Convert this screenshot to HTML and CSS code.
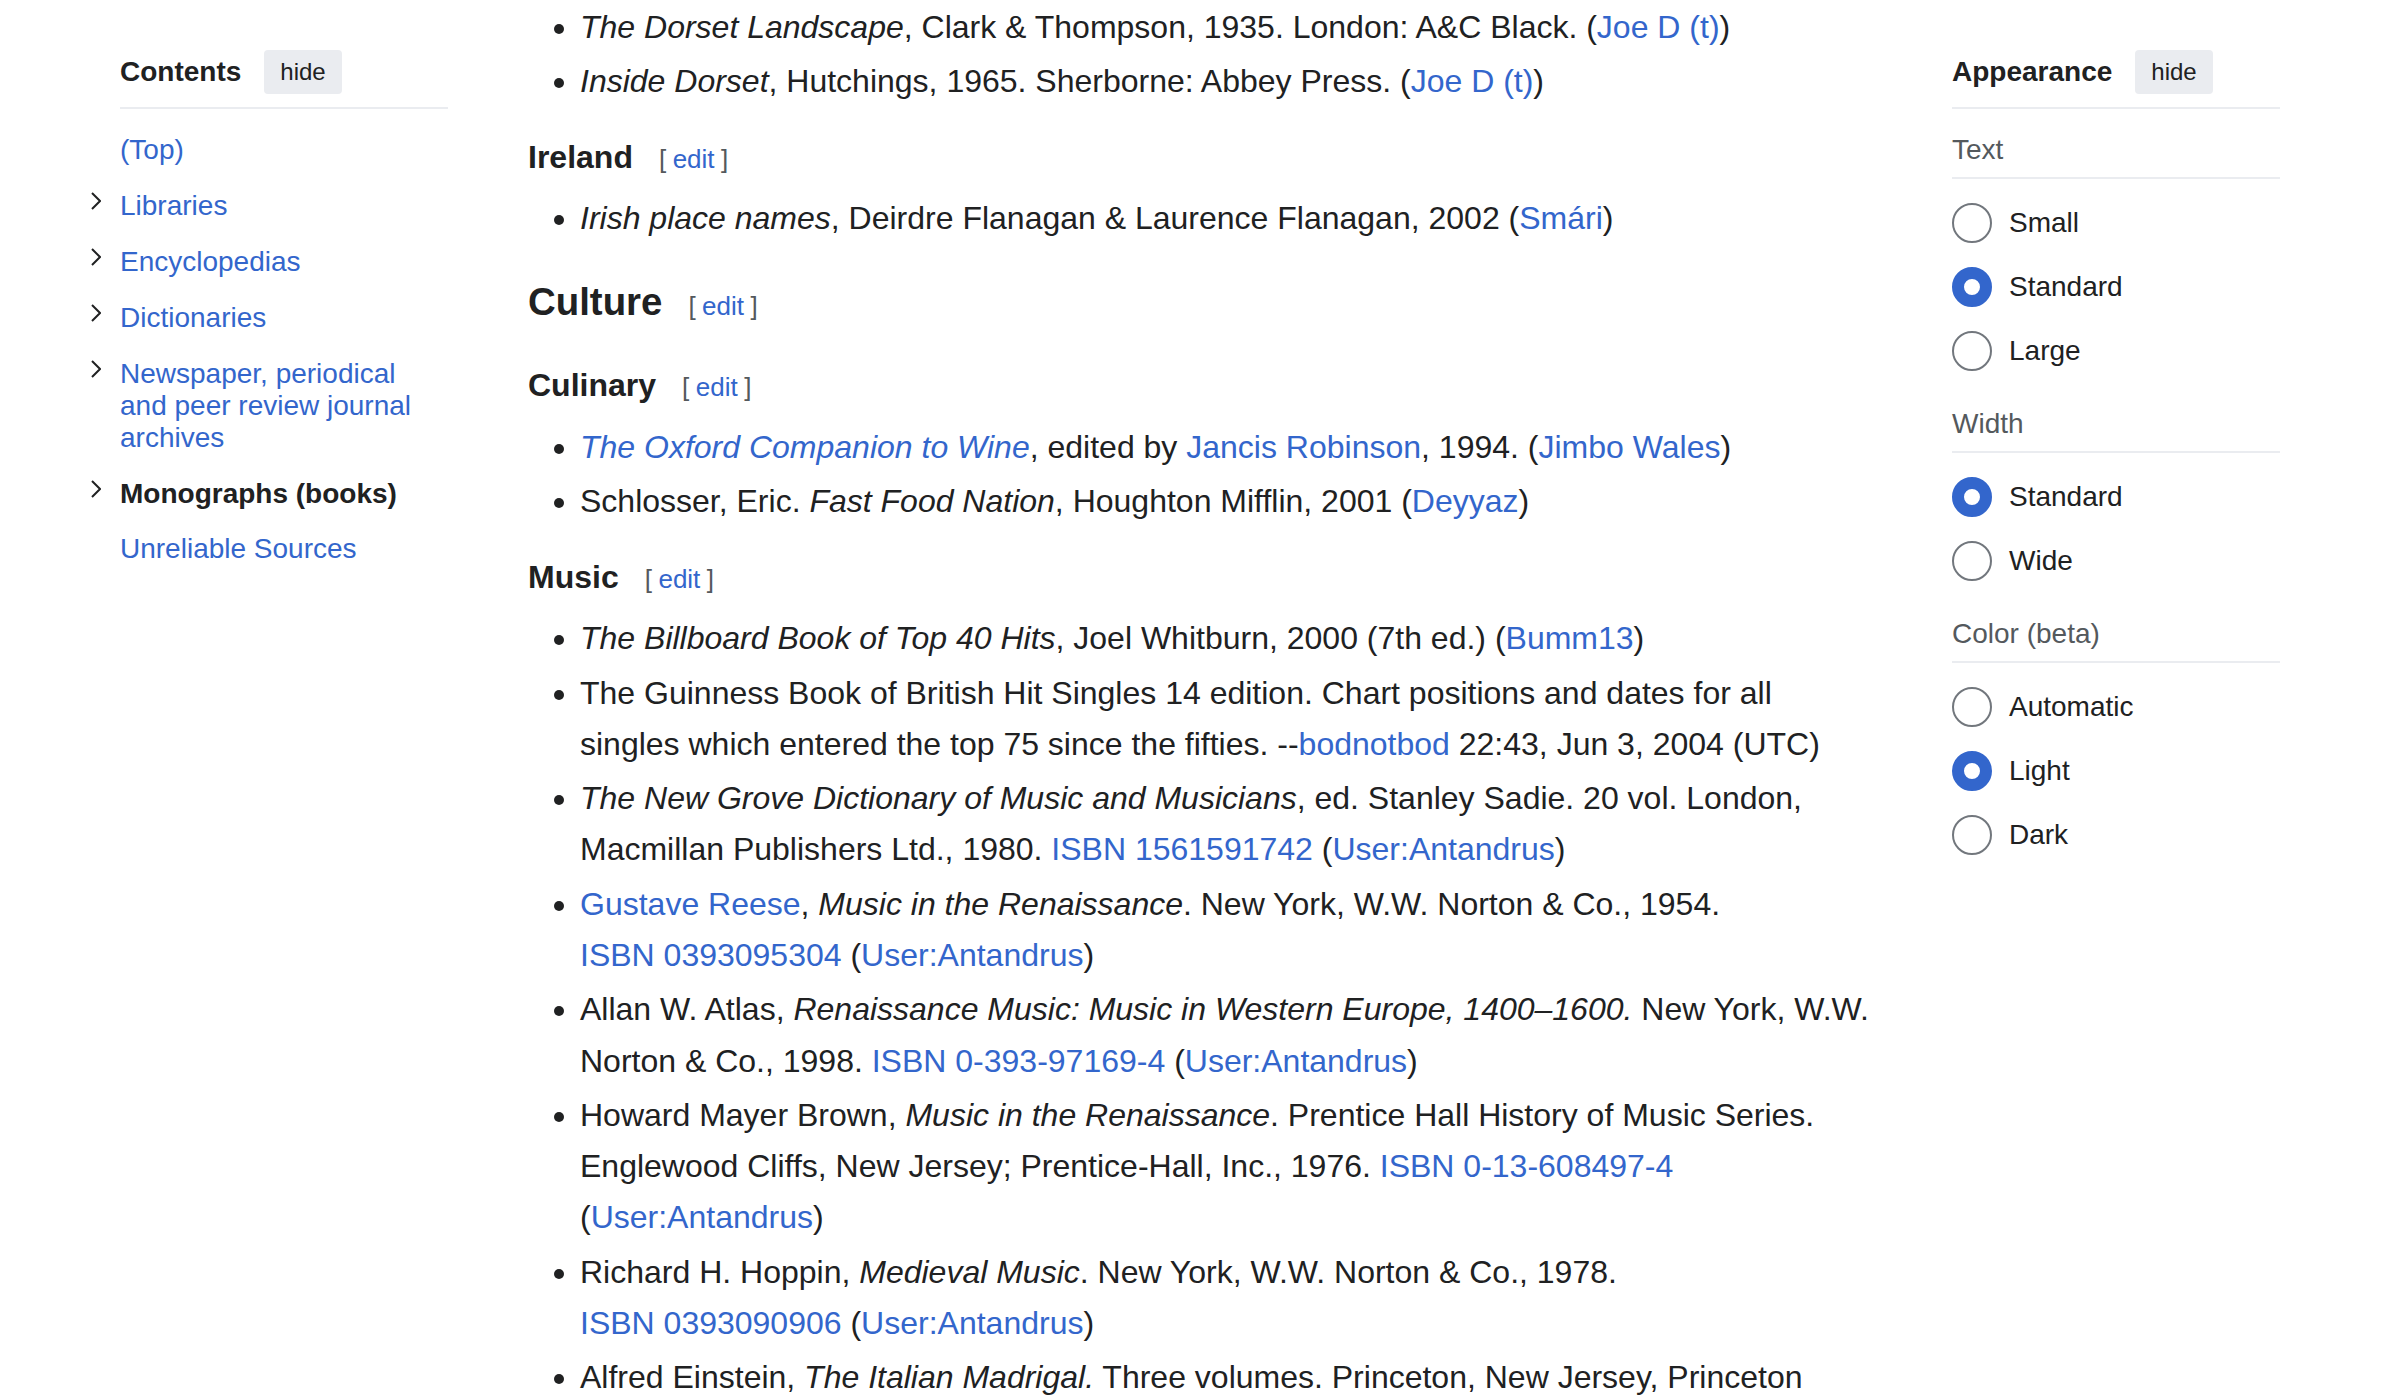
FILE: index.html
```html
<!DOCTYPE html>
<html lang="en">
<head>
<meta charset="utf-8">
<title>Bibliography</title>
<link rel="stylesheet" href="styles.css">
</head>
<body>
<div class="page">
  <nav class="toc">
    <div class="panel-head">
      <span class="panel-title">Contents</span>
      <button class="hide-btn">hide</button>
    </div>
    <ul class="toc-list">
      <li class="toc-item"><a href="#">(Top)</a></li>
      <li class="toc-item"><span class="toggle"><svg width="10" height="18" viewBox="0 0 10 18"><path d="M1 1 L9 9 L1 17" fill="none" stroke="#202122" stroke-width="2"/></svg></span><a href="#">Libraries</a></li>
      <li class="toc-item"><span class="toggle"><svg width="10" height="18" viewBox="0 0 10 18"><path d="M1 1 L9 9 L1 17" fill="none" stroke="#202122" stroke-width="2"/></svg></span><a href="#">Encyclopedias</a></li>
      <li class="toc-item"><span class="toggle"><svg width="10" height="18" viewBox="0 0 10 18"><path d="M1 1 L9 9 L1 17" fill="none" stroke="#202122" stroke-width="2"/></svg></span><a href="#">Dictionaries</a></li>
      <li class="toc-item"><span class="toggle"><svg width="10" height="18" viewBox="0 0 10 18"><path d="M1 1 L9 9 L1 17" fill="none" stroke="#202122" stroke-width="2"/></svg></span><a href="#">Newspaper, periodical and peer review journal archives</a></li>
      <li class="toc-item"><span class="toggle"><svg width="10" height="18" viewBox="0 0 10 18"><path d="M1 1 L9 9 L1 17" fill="none" stroke="#202122" stroke-width="2"/></svg></span><a href="#" class="active">Monographs (books)</a></li>
      <li class="toc-item"><a href="#">Unreliable Sources</a></li>
    </ul>
  </nav>

  <main class="main">
    <ul class="refs first">
      <li><i>The Dorset Landscape</i>, Clark &amp; Thompson, 1935. London: A&amp;C Black. (<a href="#">Joe D (t)</a>)</li>
      <li><i>Inside Dorset</i>, Hutchings, 1965. Sherborne: Abbey Press. (<a href="#">Joe D (t)</a>)</li>
    </ul>
    <h4>Ireland<span class="edit"><span class="br">[</span><a href="#">edit</a><span class="br">]</span></span></h4>
    <ul class="refs">
      <li><i>Irish place names</i>, Deirdre Flanagan &amp; Laurence Flanagan, 2002 (<a href="#">Smári</a>)</li>
    </ul>
    <h3>Culture<span class="edit"><span class="br">[</span><a href="#">edit</a><span class="br">]</span></span></h3>
    <h4>Culinary<span class="edit"><span class="br">[</span><a href="#">edit</a><span class="br">]</span></span></h4>
    <ul class="refs">
      <li><a href="#"><i>The Oxford Companion to Wine</i></a>, edited by <a href="#">Jancis Robinson</a>, 1994. (<a href="#">Jimbo Wales</a>)</li>
      <li>Schlosser, Eric. <i>Fast Food Nation</i>, Houghton Mifflin, 2001 (<a href="#">Deyyaz</a>)</li>
    </ul>
    <h4>Music<span class="edit"><span class="br">[</span><a href="#">edit</a><span class="br">]</span></span></h4>
    <ul class="refs">
      <li><i>The Billboard Book of Top 40 Hits</i>, Joel Whitburn, 2000 (7th ed.) (<a href="#">Bumm13</a>)</li>
      <li>The Guinness Book of British Hit Singles 14 edition. Chart positions and dates for all singles which entered the top 75 since the fifties. --<a href="#">bodnotbod</a> 22:43, Jun 3, 2004 (UTC)</li>
      <li><i>The New Grove Dictionary of Music and Musicians</i>, ed. Stanley Sadie. 20 vol. London, Macmillan Publishers Ltd., 1980. <a href="#">ISBN&nbsp;1561591742</a> (<a href="#">User:Antandrus</a>)</li>
      <li><a href="#">Gustave Reese</a>, <i>Music in the Renaissance</i>. New York, W.W. Norton &amp; Co., 1954. <a href="#">ISBN&nbsp;0393095304</a> (<a href="#">User:Antandrus</a>)</li>
      <li>Allan W. Atlas, <i>Renaissance Music: Music in Western Europe, 1400–1600.</i> New York, W.W. Norton &amp; Co., 1998. <a href="#">ISBN&nbsp;0-393-97169-4</a> (<a href="#">User:Antandrus</a>)</li>
      <li>Howard Mayer Brown, <i>Music in the Renaissance</i>. Prentice Hall History of Music Series. Englewood Cliffs, New Jersey; Prentice-Hall, Inc., 1976. <a href="#">ISBN&nbsp;0-13-608497-4</a> (<a href="#">User:Antandrus</a>)</li>
      <li>Richard H. Hoppin, <i>Medieval Music</i>. New York, W.W. Norton &amp; Co., 1978. <a href="#">ISBN&nbsp;0393090906</a> (<a href="#">User:Antandrus</a>)</li>
      <li>Alfred Einstein, <i>The Italian Madrigal.</i> Three volumes. Princeton, New Jersey, Princeton University Press, 1949.</li>
    </ul>
  </main>

  <aside class="appearance">
    <div class="panel-head">
      <span class="panel-title">Appearance</span>
      <button class="hide-btn">hide</button>
    </div>
    <section class="group first">
      <div class="group-label">Text</div>
      <div class="radios">
        <label class="radio"><input type="radio" name="text"><span>Small</span></label>
        <label class="radio"><input type="radio" name="text" checked><span>Standard</span></label>
        <label class="radio"><input type="radio" name="text"><span>Large</span></label>
      </div>
    </section>
    <section class="group">
      <div class="group-label">Width</div>
      <div class="radios">
        <label class="radio"><input type="radio" name="width" checked><span>Standard</span></label>
        <label class="radio"><input type="radio" name="width"><span>Wide</span></label>
      </div>
    </section>
    <section class="group">
      <div class="group-label">Color (beta)</div>
      <div class="radios">
        <label class="radio"><input type="radio" name="color"><span>Automatic</span></label>
        <label class="radio"><input type="radio" name="color" checked><span>Light</span></label>
        <label class="radio"><input type="radio" name="color"><span>Dark</span></label>
      </div>
    </section>
  </aside>
</div>
</body>
</html>
```

FILE: styles.css
```css
html, body {
  margin: 0;
  padding: 0;
  background: #ffffff;
}

body {
  font-family: "Liberation Sans", Arial, sans-serif;
  color: #202122;
  overflow: hidden;
}

a {
  color: #3366cc;
  text-decoration: none;
}

.page {
  display: flex;
  align-items: flex-start;
  padding-left: 120px;
}

/* ---------- side panels ---------- */
.toc {
  width: 328px;
  flex: none;
}

.appearance {
  width: 328px;
  flex: none;
  margin-left: 79px;
}

.panel-head {
  display: flex;
  align-items: center;
  gap: 23px;
  height: 43.5px;
  margin-top: 50px;
  padding-bottom: 13.5px;
  border-bottom: 2px solid #eaecf0;
}

.panel-title {
  font-size: 28px;
  font-weight: bold;
  line-height: 32px;
}

.hide-btn {
  font-family: "Liberation Sans", Arial, sans-serif;
  font-size: 24px;
  color: #202122;
  background: #eaecf0;
  border: none;
  border-radius: 4px;
  height: 43.5px;
  padding: 0 16px;
}

.toc-list {
  list-style: none;
  margin: 0;
  padding: 13.3px 0 0;
}

.toc-item {
  display: flex;
  align-items: flex-start;
  padding: 12.2px 0;
  font-size: 28px;
  line-height: 31.6px;
}

.toggle {
  flex: none;
  width: 29px;
  margin-left: -29px;
  margin-top: 2px;
  height: 18px;
  display: flex;
}

.toc-item a.active {
  color: #202122;
  font-weight: bold;
}

/* ---------- main content ---------- */
.main {
  flex: none;
  width: 1345px;
  margin-left: 80px;
  padding-top: 1.6px;
  font-size: 32px;
  line-height: 1.6;
}

.refs {
  margin: 10.5px 0 0;
  padding-left: 52px;
  list-style: disc;
}

.refs.first {
  margin-top: 0;
}

.refs li {
  margin-bottom: 3.2px;
}

.main h4 {
  font-size: 32px;
  font-weight: bold;
  line-height: 1.6;
  margin: 24.4px 0 0;
}

.main h3 {
  font-size: 38.4px;
  font-weight: bold;
  line-height: 1.6;
  margin: 26.5px 0 0;
}

.main h3 + h4 {
  margin-top: 27.6px;
}

.edit {
  font-size: 26px;
  font-weight: normal;
  margin-left: 26px;
  color: #54595d;
}

.edit a {
  margin: 0 6.5px;
}

/* ---------- appearance ---------- */
.group-label {
  font-size: 28px;
  line-height: 32px;
  color: #54595d;
  margin-top: 37.1px;
  padding-bottom: 11.1px;
  border-bottom: 2px solid #eaecf0;
}

.group.first .group-label {
  margin-top: 24.6px;
}

.radios {
  display: flex;
  flex-direction: column;
  gap: 24px;
  padding-top: 24px;
}

.radio {
  display: flex;
  align-items: center;
  gap: 17px;
  height: 40px;
  font-size: 28px;
  color: #202122;
}

.radio input {
  appearance: none;
  -webkit-appearance: none;
  margin: 0;
  width: 40px;
  height: 40px;
  box-sizing: border-box;
  border-radius: 50%;
  border: 2px solid #72777d;
  background: #ffffff;
  flex: none;
}

.radio input:checked {
  border: 12px solid #3366cc;
}
```
